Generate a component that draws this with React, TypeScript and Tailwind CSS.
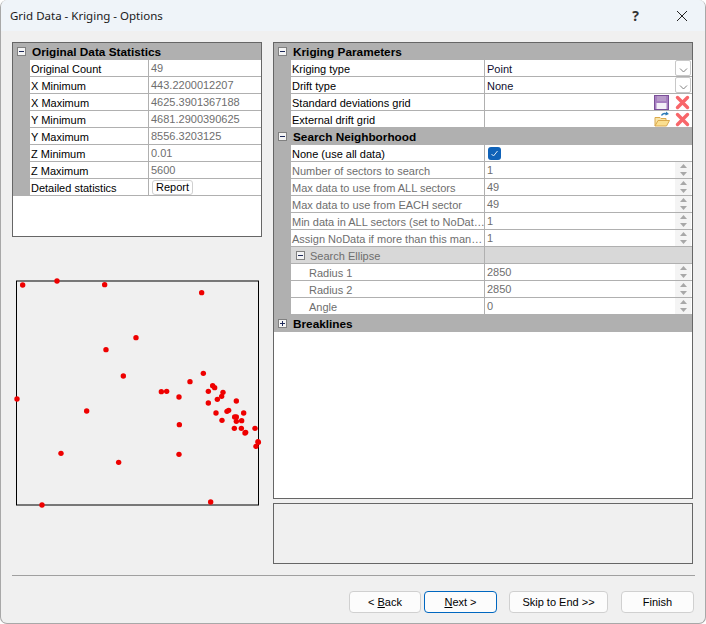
import React from 'react';

const FONT = '"Liberation Sans", Arial, sans-serif';

const points: [number, number][] = [
  [68, 45], [171, 33], [314, 44], [605, 68], [408, 203], [318, 239], [370, 318], [610, 310], [570, 335],
  [638, 347], [644, 353], [625, 364], [669, 367], [665, 379], [652, 388], [484, 365], [500, 364], [537, 381],
  [625, 399], [709, 393], [51, 387], [260, 423], [648, 429], [681, 424], [686, 421], [731, 429], [704, 441],
  [709, 441], [709, 454], [725, 452], [666, 451], [538, 464], [703, 475], [724, 475], [765, 475], [735, 489],
  [737, 487], [774, 515], [775, 517], [768, 529], [183, 550], [537, 553], [356, 577], [126, 705], [632, 696],
];

const Toggle = ({ open }: { open: boolean }) => (
  <svg width="9" height="9" viewBox="0 0 9 9" className="shrink-0">
    <rect x="0.5" y="0.5" width="8" height="8" fill="#f4f4f4" stroke="#808080" />
    <path d={open ? 'M2 4.5h5' : 'M2 4.5h5M4.5 2v5'} stroke="#1e2a5a" />
  </svg>
);

const Header = ({ title, open = true }: { title: string; open?: boolean }) => (
  <div className="h-[17px] shrink-0 bg-[#b0b0b0] flex items-center pl-[4px] gap-[6px]">
    <Toggle open={open} />
    <span className="font-bold text-[11.800px] text-black pt-[2px]">{title}</span>
  </div>
);

const Chevron = () => (
  <div className="w-[16px] h-[16px] bg-white border border-[#c8c8c8] rounded-[2px] flex items-center justify-center mr-[1px]">
    <svg width="9" height="5" viewBox="0 0 9 5" className="mt-[4px]">
      <path d="M1 0.500l3.500 3.500 3.500-3.500" fill="none" stroke="#808080" />
    </svg>
  </div>
);

const Spinner = () => (
  <div className="w-[16px] h-[16px] bg-[#f4f4f4] flex flex-col items-center justify-around mr-[1px]">
    <svg width="7" height="4" viewBox="0 0 7 4"><path d="M3.5 0L7 4H0z" fill="#a8a8a8" /></svg>
    <svg width="7" height="4" viewBox="0 0 7 4"><path d="M0 0h7L3.5 4z" fill="#a8a8a8" /></svg>
  </div>
);

const RedX = () => (
  <svg width="15" height="15" viewBox="0 0 15 15">
    <path d="M2.500 2.500l10 10M12.500 2.500l-10 10" stroke="#f8666a" strokeWidth="3.400" strokeLinecap="round" />
  </svg>
);

const Floppy = () => (
  <svg width="15" height="15" viewBox="0 0 15 15">
    <rect x="0.5" y="0.5" width="14" height="14" fill="#a77fc0" stroke="#7a4f98" />
    <rect x="3" y="1" width="9" height="5" fill="#b79ac9" />
    <rect x="2.500" y="8" width="10" height="6" fill="#f4f0f7" />
  </svg>
);

const OpenFolder = () => (
  <svg width="16" height="16" viewBox="0 0 16 16">
    <path d="M1 15V6.500h5l1 1h5V10" fill="#f8e4a8" stroke="#dba94c" />
    <path d="M1 15l3-5.500h11.500L12.500 15z" fill="#fbdf90" stroke="#dba94c" />
    <path d="M7.500 4.500C8.500 2.500 10.500 2 12.500 3" fill="none" stroke="#2c7bb8" strokeWidth="1.400" />
    <path d="M12 0.500l3 2.500-3.500 1.500z" fill="#2c7bb8" />
  </svg>
);

const Checkbox = () => (
  <div className="w-[13px] h-[13px] rounded-[3px] bg-[#0f62b8] flex items-center justify-center ml-[1px]">
    <svg width="9" height="9" viewBox="0 0 9 9"><path d="M1.500 5l2 2 4-5" fill="none" stroke="#dce9f6" /></svg>
  </div>
);

type RowProps = {
  label: string;
  value?: string;
  dim?: boolean;
  indent?: boolean;
  labelWidth: string;
  children?: React.ReactNode;
  valueDark?: boolean;
};

const Row = ({ label, value, dim, indent, labelWidth, children, valueDark }: RowProps) => (
  <div className="h-[17px] shrink-0 flex">
    <div className="w-[17px] shrink-0 bg-[#b0b0b0]" />
    <div className={`${labelWidth} shrink-0 border-b border-r border-[#b0b0b0] bg-white flex items-center overflow-hidden whitespace-nowrap text-[11px] pt-[2px] ${indent ? 'pl-[18px]' : 'pl-[1px]'} ${dim ? 'text-[#6e6e6e]' : 'text-black'}`}>
      {label}
    </div>
    <div className="flex-1 min-w-0 border-b border-[#b0b0b0] bg-white flex items-center justify-between pl-[2px]">
      {value && (
        <span className={`text-[11px] whitespace-nowrap ${valueDark ? 'text-[#101030] pt-[2px]' : 'text-[#6e6e6e] pt-[1px]'}`}>{value}</span>
      )}
      {children}
    </div>
  </div>
);

const stats = [
  ['Original Count', '49'],
  ['X Minimum', '443.2200012207'],
  ['X Maximum', '4625.3901367188'],
  ['Y Minimum', '4681.2900390625'],
  ['Y Maximum', '8556.3203125'],
  ['Z Minimum', '0.01'],
  ['Z Maximum', '5600'],
];

const disabledRows = [
  ['Number of sectors to search', '1'],
  ['Max data to use from ALL sectors', '49'],
  ['Max data to use from EACH sector', '49'],
  ['Min data in ALL sectors (set to NoDat…', '1'],
  ['Assign NoData if more than this man…', '1'],
];

const ellipseRows = [
  ['Radius 1', '2850'],
  ['Radius 2', '2850'],
  ['Angle', '0'],
];

const NavButton = ({ children, width, focus }: { children: React.ReactNode; width: string; focus?: boolean }) => (
  <button className={`${width} h-[22px] rounded-[4px] bg-[#fcfcfc] border pt-[1px] text-[11px] text-black flex items-center justify-center ${focus ? 'border-[#0067c0]' : 'border-[#d0d0d0]'}`}>
    {children}
  </button>
);

const App: React.FC = () => {
  const lw = 'w-[194px]';
  return (
    <div className="w-[706px] h-[624px] bg-[#f0f0f0] flex flex-col overflow-hidden border-r border-b border-l border-[#a8a8a8] rounded-t-[7px] rounded-b-[7px]" style={{ fontFamily: FONT }}>
      <div className="h-[31px] shrink-0 bg-[#eff4f9] flex items-center pl-[9px]">
        <span className="text-[11.500px] text-[#1a1a1a] font-['Noto_Sans']">Grid Data - Kriging - Options</span>
        <span className="ml-auto text-[14px] font-bold text-[#333] mr-[37px] font-['Noto_Sans']">?</span>
        <svg width="12" height="12" viewBox="0 0 12 12" className="mr-[17px]">
          <path d="M1 1l10 10M11 1L1 11" stroke="#222" />
        </svg>
      </div>

      <div className="flex gap-[11px] pl-[11px] pt-[11px]">
        <div className="w-[250px] shrink-0 flex flex-col">
          <div className="h-[195px] border border-[#666] bg-white flex flex-col">
            <Header title="Original Data Statistics" />
            {stats.map(([k, v]) => (
              <Row key={k} label={k} value={v} labelWidth="w-[119px]" />
            ))}
            <div className="h-[17px] shrink-0 flex">
              <div className="w-[17px] shrink-0 bg-[#b0b0b0]" />
              <div className="w-[119px] shrink-0 border-b border-r border-[#b0b0b0] flex items-center pl-[1px] pt-[2px] text-[11px] text-black whitespace-nowrap">Detailed statistics</div>
              <div className="flex-1 border-b border-[#b0b0b0] flex items-center pl-[3px]">
                <div className="w-[41px] h-[15px] border border-[#d0d0d0] rounded-[3px] flex items-center justify-center pt-[1px] text-[11px] text-black">Report</div>
              </div>
            </div>
          </div>
          <svg width="250" height="240" viewBox="0 0 250 240" className="mt-[38px]">
            <rect x="4.500" y="6" width="242" height="224" fill="none" stroke="#000" />
            <path d="M4 5.500h243M4 230.500h243" stroke="#777" strokeWidth="1" />
            {points.map(([x, y], i) => (
              <circle key={i} cx={x / 3 - 12} cy={y / 3 + 270 - 275} r="2.700" fill="#ee0000" />
            ))}
          </svg>
        </div>

        <div className="w-[420px] shrink-0 flex flex-col">
          <div className="h-[457px] border border-[#666] bg-white flex flex-col">
            <Header title="Kriging Parameters" />
            <Row label="Kriging type" value="Point" labelWidth={lw} valueDark><Chevron /></Row>
            <Row label="Drift type" value="None" labelWidth={lw} valueDark><Chevron /></Row>
            <Row label="Standard deviations grid" labelWidth={lw}>
              <div className="ml-auto flex items-center gap-[6px] mr-[2px]"><Floppy /><RedX /></div>
            </Row>
            <Row label="External drift grid" labelWidth={lw}>
              <div className="ml-auto flex items-center gap-[5px] mr-[2px]"><OpenFolder /><RedX /></div>
            </Row>
            <Header title="Search Neighborhood" />
            <Row label="None (use all data)" labelWidth={lw}><Checkbox /></Row>
            {disabledRows.map(([k, v]) => (
              <Row key={k} label={k} value={v} dim labelWidth={lw}><Spinner /></Row>
            ))}
            <div className="h-[17px] shrink-0 flex">
              <div className="w-[17px] shrink-0 bg-[#b0b0b0]" />
              <div className="flex-1 bg-[#d8d8d8] border-b border-[#b0b0b0] flex items-center">
                <div className="w-[194px] h-full border-r border-[#b0b0b0] flex items-center pl-[5px] gap-[5px] text-[11px] text-[#6e6e6e]">
                  <Toggle open />
                  <span className="pt-[2px]">Search Ellipse</span>
                </div>
              </div>
            </div>
            {ellipseRows.map(([k, v]) => (
              <Row key={k} label={k} value={v} dim indent labelWidth={lw}><Spinner /></Row>
            ))}
            <Header title="Breaklines" open={false} />
          </div>
          <div className="h-[61px] mt-[4px] border border-[#666]" />
        </div>
      </div>

      <div className="mx-[11px] mt-[11px] w-[683px] border-t border-[#a0a0a0]" />

      <div className="flex pl-[348px] pt-[15px]">
        <NavButton width="w-[72px]"><span>&lt; <u>B</u>ack</span></NavButton>
        <div className="w-[3px]" />
        <NavButton width="w-[73px]" focus><span><u>N</u>ext &gt;</span></NavButton>
        <div className="w-[12px]" />
        <NavButton width="w-[99px]">Skip to End &gt;&gt;</NavButton>
        <div className="w-[13px]" />
        <NavButton width="w-[73px]">Finish</NavButton>
      </div>
    </div>
  );
};

export default App;
